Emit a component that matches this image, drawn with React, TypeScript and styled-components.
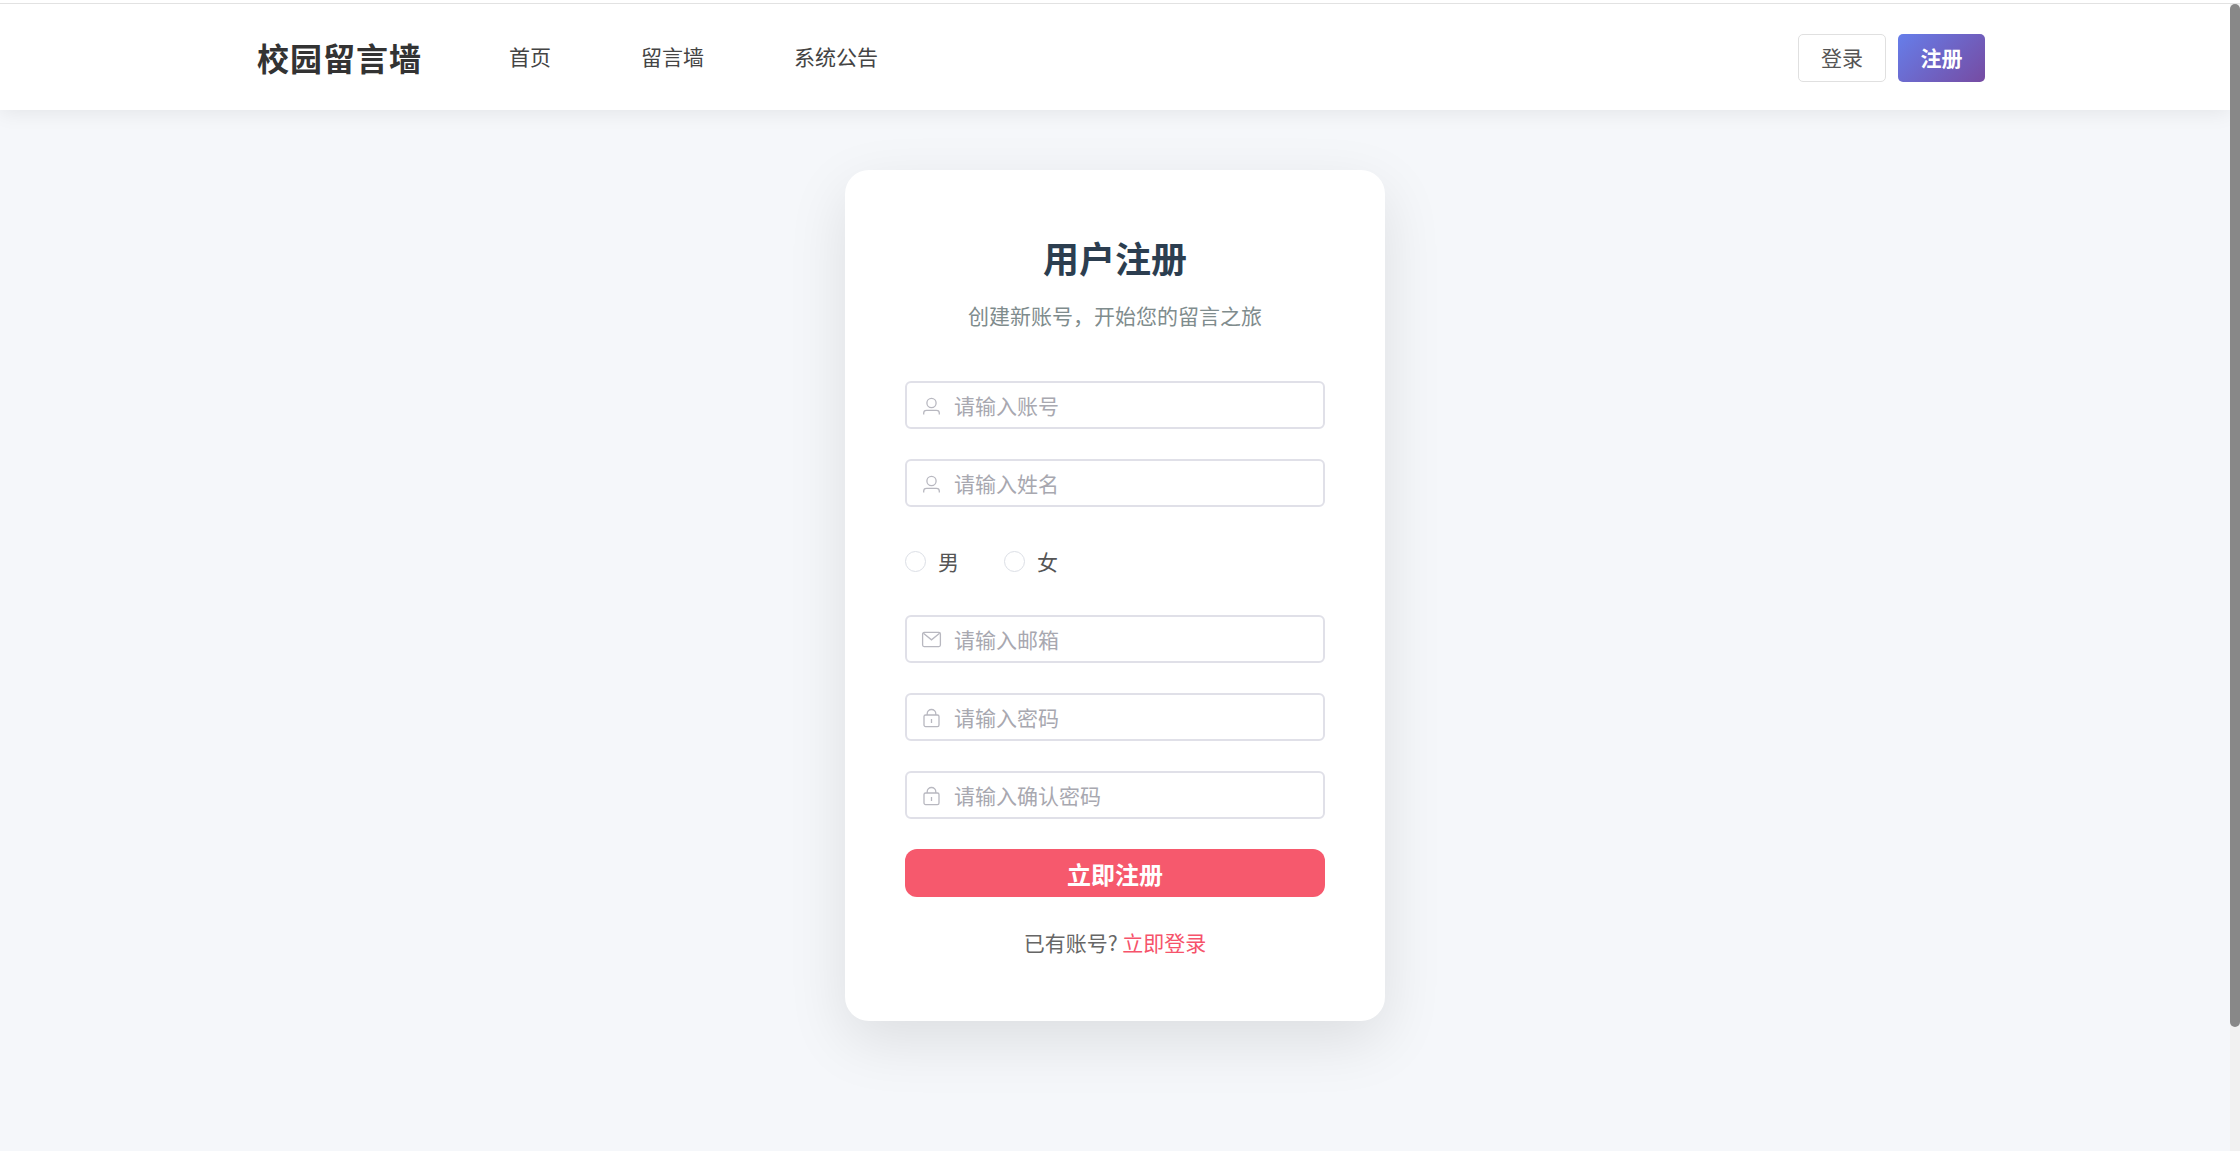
import React from "react";
import styled, { createGlobalStyle } from "styled-components";

const Global = createGlobalStyle`
  html, body { margin: 0; padding: 0; height: 100%; overflow: hidden; }
  body { font-family: "Noto Sans CJK SC", "Noto Sans", sans-serif; background: #fff; }
  * { box-sizing: border-box; }
`;

const Frame = styled.div`
  height: 1151px;
  display: flex;
  flex-direction: column;
  background: #fff;
`;

const TopEdge = styled.div`
  height: 4px;
  flex: none;
  background: #fff;
  border-bottom: 1px solid #e2e2e2;
`;

const Viewport = styled.div`
  flex: 1;
  min-height: 0;
  display: flex;
`;

const Page = styled.div`
  flex: 1;
  min-width: 0;
  overflow: hidden;
  background: #f5f7fa;
`;

const ScrollTrack = styled.div`
  width: 10px;
  flex: none;
  background: #f1f1f1;
`;

const ScrollThumb = styled.div`
  height: 1023px;
  background: #888;
  border-radius: 5px;
`;

const Header = styled.header`
  height: 106px;
  background: #fff;
  box-shadow: 0 2px 20px rgba(0, 0, 0, 0.08);
  position: relative;
`;

const HeaderInner = styled.div`
  height: 100%;
  padding: 2px 245px 0 257px;
  display: flex;
  align-items: center;
  justify-content: space-between;
`;

const Left = styled.div`
  display: flex;
  align-items: center;
  padding-bottom: 3px;
`;

const Logo = styled.div`
  font-size: 32px;
  font-weight: 700;
  letter-spacing: 1px;
  color: #333;
  margin-right: 87px;
  line-height: 1;
`;

const Nav = styled.nav`
  display: flex;
  gap: 90px;
`;

const NavLink = styled.a`
  font-size: 21px;
  color: #444;
  line-height: 1;
`;

const Actions = styled.div`
  display: flex;
  gap: 12px;
`;

const HeaderButton = styled.button<{ $primary?: boolean }>`
  height: 48px;
  width: ${(p) => (p.$primary ? "87px" : "88px")};
  padding: 0 0 2px;
  border-radius: 5px;
  font-family: inherit;
  font-size: 21px;
  border: ${(p) => (p.$primary ? "none" : "1px solid #e0e0e0")};
  font-weight: ${(p) => (p.$primary ? 700 : 400)};
  color: ${(p) => (p.$primary ? "#fff" : "#555")};
  background: ${(p) => (p.$primary ? "linear-gradient(135deg, #667eea, #764ba2)" : "#fff")};
`;

const Main = styled.main`
  display: flex;
  justify-content: center;
  padding: 60px 0 160px;
`;

const Card = styled.section`
  width: 540px;
  height: 851px;
  background: #fff;
  border-radius: 24px;
  padding: 61px 60px 60px;
  box-shadow: 0 20px 60px rgba(0, 0, 0, 0.1);
  display: flex;
  flex-direction: column;
`;

const Title = styled.h1`
  margin: 0;
  text-align: center;
  font-size: 36px;
  line-height: 52px;
  font-weight: 700;
  color: #2c3e50;
`;

const Subtitle = styled.p`
  margin: 16px 0 50px;
  text-align: center;
  font-size: 21px;
  line-height: 32px;
  color: #7f8c8d;
`;

const Form = styled.form`
  display: flex;
  flex-direction: column;
  gap: 30px;
`;

const Field = styled.label`
  height: 48px;
  border: 2px solid #e0e0e8;
  border-radius: 6px;
  background: #fff;
  display: flex;
  align-items: center;
  padding-left: 14px;
  gap: 12px;
  color: #b8b8c0;
`;

const FieldInput = styled.input`
  border: none;
  outline: none;
  flex: 1;
  min-width: 0;
  padding: 0;
  font-family: inherit;
  font-size: 21px;
  background: transparent;
  &::placeholder { color: #a8a8b0; opacity: 1; }
`;

const RadioRow = styled.div`
  height: 48px;
  display: flex;
  align-items: center;
  gap: 45px;
`;

const RadioLabel = styled.label`
  display: flex;
  align-items: center;
  gap: 12px;
  font-size: 21px;
  color: #555;
`;

const RadioDot = styled.span`
  width: 21px;
  height: 21px;
  border-radius: 50%;
  border: 1px solid #dcdfe6;
  background: #fff;
`;

const Submit = styled.button`
  height: 48px;
  border: none;
  border-radius: 12px;
  background: #f6596d;
  color: #fff;
  font-family: inherit;
  font-size: 24px;
  font-weight: 700;
  padding: 0;
`;

const Footer = styled.p`
  margin: 30px 0 0;
  text-align: center;
  font-size: 21px;
  line-height: 30px;
  color: #666;
`;

const FooterLink = styled.a`
  color: #f6536b;
`;

const Spacer = styled.div`
  height: 120px;
`;

const UserIcon = () => (
  <svg width="21" height="21" viewBox="0 0 21 21" fill="none" stroke="currentColor" strokeWidth="1.3">
    <circle cx="10.5" cy="8" r="4.6" />
    <path d="M2.7 19.5v-1.4c0-1.6 1.2-2.8 2.8-2.8h10c1.6 0 2.8 1.2 2.8 2.8v1.4" />
  </svg>
);

const MailIcon = () => (
  <svg width="21" height="21" viewBox="0 0 21 21" fill="none" stroke="currentColor" strokeWidth="1.3">
    <rect x="1.6" y="3.4" width="17.8" height="14.2" rx="1.5" />
    <path d="M2.4 4.2l8.1 6.6 8.1-6.6" />
  </svg>
);

const LockIcon = () => (
  <svg width="21" height="21" viewBox="0 0 21 21" fill="none" stroke="currentColor" strokeWidth="1.3">
    <rect x="3" y="8" width="15" height="11.6" rx="1.6" />
    <path d="M6.2 8V6.8a4.3 4.3 0 0 1 8.6 0V8M10.5 12v4" />
  </svg>
);

const fields = {
  before: [
    { icon: <UserIcon />, placeholder: "请输入账号" },
    { icon: <UserIcon />, placeholder: "请输入姓名" },
  ],
  after: [
    { icon: <MailIcon />, placeholder: "请输入邮箱" },
    { icon: <LockIcon />, placeholder: "请输入密码" },
    { icon: <LockIcon />, placeholder: "请输入确认密码" },
  ],
};

export default function App() {
  return (
    <Frame>
      <Global />
      <TopEdge />
      <Viewport>
        <Page>
          <Header>
            <HeaderInner>
              <Left>
                <Logo>校园留言墙</Logo>
                <Nav>
                  <NavLink>首页</NavLink>
                  <NavLink>留言墙</NavLink>
                  <NavLink>系统公告</NavLink>
                </Nav>
              </Left>
              <Actions>
                <HeaderButton>登录</HeaderButton>
                <HeaderButton $primary>注册</HeaderButton>
              </Actions>
            </HeaderInner>
          </Header>
          <Main>
            <Card>
              <Title>用户注册</Title>
              <Subtitle>创建新账号，开始您的留言之旅</Subtitle>
              <Form>
                {fields.before.map((f) => (
                  <Field key={f.placeholder}>
                    {f.icon}
                    <FieldInput placeholder={f.placeholder} />
                  </Field>
                ))}
                <RadioRow>
                  <RadioLabel><RadioDot />男</RadioLabel>
                  <RadioLabel><RadioDot />女</RadioLabel>
                </RadioRow>
                {fields.after.map((f) => (
                  <Field key={f.placeholder}>
                    {f.icon}
                    <FieldInput placeholder={f.placeholder} />
                  </Field>
                ))}
                <Submit type="button">立即注册</Submit>
              </Form>
              <Footer>已有账号? <FooterLink>立即登录</FooterLink></Footer>
            </Card>
          </Main>
          <Spacer />
        </Page>
        <ScrollTrack>
          <ScrollThumb />
        </ScrollTrack>
      </Viewport>
    </Frame>
  );
}
